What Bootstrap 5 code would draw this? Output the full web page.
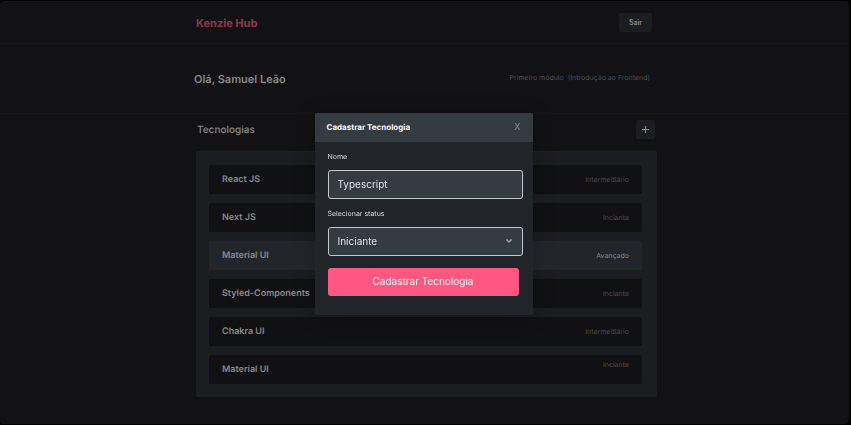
<!DOCTYPE html>
<html lang="pt-BR">
<head>
<meta charset="utf-8">
<meta name="viewport" content="width=device-width, initial-scale=1">
<title>Kenzie Hub</title>
<link href="https://cdn.jsdelivr.net/npm/bootstrap@5.3.0/dist/css/bootstrap.min.css" rel="stylesheet">
<style>
body { background: #000; font-family: Inter, "Liberation Sans", sans-serif; font-size: 8px; line-height: 12px; color: #87888a; text-rendering: geometricPrecision; }
.app-shell { min-height: calc(100vh - 2px); margin: 1px 2px 1px 0; background: #121214; border-radius: 4px; }
.rule-below { border-bottom: 1px solid #17181b; }
.wrap-head { max-width: 457px; height: 42px; padding-right: 1px; }
.wrap-hello { max-width: 461px; height: 69px; padding-right: 5px; }
.wrap-tech { max-width: 467px; padding: 6px 1px 0 5px; }
.brand { font-size: 11px; font-weight: 700; color: #8f354c; text-decoration: none; padding-top: 2px; }
.hello { font-size: 11px; font-weight: 600; padding-top: 2px; }
.module-name { font-size: 7px; color: #4b4d51; white-space: pre; padding-bottom: 2px; }
.tech-title { font-size: 10px; font-weight: 500; padding-left: 1px; }
.btn-dim { background: #1b1d20; color: #87888a; border: 0; border-radius: 2px; height: 19px; font-size: 7px; line-height: 19px; font-weight: 600; padding: 0; }
.btn-exit { width: 33px; }
.btn-plus { width: 19px; margin-right: 2px; }
.tech-list { background: #1b1d20; border-radius: 2px; padding: 14px 15px 13px 13px; gap: 9px; margin-top: 12px; }
.tech-row { background: #111113; border-radius: 2px; height: 29px; padding: 0 13px; }
.tech-row.active-row { background: #22262a; }
.tech-name { font-size: 9px; font-weight: 600; }
.tech-level { font-size: 7px; color: #4b4d51; }
.active-row .tech-level { color: #85888b; }
.dialog-tech { max-width: 218px; margin: 0 auto; padding: 2px 0 0; left: -2px; }
.box-tech { background: #212529; border: 0; border-radius: 2px; box-shadow: 0 2px 20px rgba(0, 0, 0, .25); color: #f8f9fa; }
.box-head { background: #343b41; height: 29px; padding: 0 12px; border-radius: 2px 2px 0 0; }
.box-title { font-size: 8px; line-height: 12px; font-weight: 700; }
.btn-x { background: none; border: 0; padding: 0; font-size: 9px; color: #868e96; }
.box-body { padding: 9px 10px 19px 13px; }
.field-label { font-size: 7px; line-height: 12px; margin: 0 0 7px; color: #dcdee0; }
.field-box { height: 29px; border: 1px solid #c5c8cb; border-radius: 3px; background: #343b41; color: #dfe2e5; font-size: 10px; line-height: 12px; padding: 0 9px; }
.field-box:focus { background: #343b41; color: #dfe2e5; box-shadow: none; border-color: #f8f9fa; }
select.field-box { background-image: none; }
.field-gap { margin-bottom: 9px; }
.chevron { right: 10px; top: 10px; pointer-events: none; }
.btn-send { background: #ff577f; color: #fff; border: 0; border-radius: 3px; height: 28px; font-size: 10px; font-weight: 400; padding: 0; margin-top: 12px; }
.send-wrap { padding-right: 4px; }
</style>
</head>
<body>
<div class="app-shell">
  <header class="rule-below">
    <div class="wrap-head mx-auto d-flex justify-content-between align-items-center">
      <a class="brand" href="#">Kenzie Hub</a>
      <button type="button" class="btn btn-dim btn-exit">Sair</button>
    </div>
  </header>
  <section class="rule-below">
    <div class="wrap-hello mx-auto d-flex justify-content-between align-items-center">
      <h1 class="hello mb-0">Olá, Samuel Leão</h1>
      <p class="module-name mb-0">Primeiro módulo  (Introdução ao Frontend)</p>
    </div>
  </section>
  <main class="wrap-tech mx-auto">
    <div class="d-flex justify-content-between align-items-center">
      <h2 class="tech-title mb-0">Tecnologias</h2>
      <button type="button" class="btn btn-dim btn-plus d-flex align-items-center justify-content-center" aria-label="Adicionar tecnologia">
        <svg width="7" height="7" viewBox="0 0 7 7" stroke="currentColor" stroke-width="1.1" aria-hidden="true"><path d="M3.5 0v7M0 3.5h7"/></svg>
      </button>
    </div>
    <ul class="tech-list list-unstyled d-flex flex-column mb-0">
      <li class="tech-row d-flex justify-content-between align-items-center"><span class="tech-name">React JS</span><span class="tech-level">Intermediário</span></li>
      <li class="tech-row d-flex justify-content-between align-items-center"><span class="tech-name">Next JS</span><span class="tech-level">Inciante</span></li>
      <li class="tech-row active-row d-flex justify-content-between align-items-center"><span class="tech-name">Material UI</span><span class="tech-level">Avançado</span></li>
      <li class="tech-row d-flex justify-content-between align-items-center"><span class="tech-name">Styled-Components</span><span class="tech-level">Inciante</span></li>
      <li class="tech-row d-flex justify-content-between align-items-center"><span class="tech-name">Chakra UI</span><span class="tech-level">Intermediário</span></li>
      <li class="tech-row d-flex justify-content-between align-items-center"><span class="tech-name">Material UI</span><span class="tech-level align-self-start pt-1">Inciante</span></li>
    </ul>
  </main>
</div>

<div class="modal d-block" tabindex="-1" role="dialog" aria-modal="true" aria-labelledby="dlgTitle">
  <div class="modal-dialog dialog-tech d-flex align-items-center min-vh-100">
    <form class="modal-content box-tech">
      <div class="box-head d-flex justify-content-between align-items-center">
        <h2 class="box-title mb-0" id="dlgTitle">Cadastrar Tecnologia</h2>
        <button type="button" class="btn-x" aria-label="Fechar">X</button>
      </div>
      <div class="box-body">
        <label class="field-label d-block" for="techName">Nome</label>
        <input class="form-control field-box field-gap" id="techName" type="text" value="Typescript">
        <label class="field-label d-block" for="techStatus">Selecionar status</label>
        <div class="position-relative">
          <select class="form-select field-box" id="techStatus">
            <option>Iniciante</option>
            <option>Intermediário</option>
            <option>Avançado</option>
          </select>
          <svg class="chevron position-absolute" width="8" height="8" viewBox="0 0 8 8" fill="none" stroke="#9a9fa5" stroke-width="1.5" aria-hidden="true"><path d="M1.4 2.4 4 5l2.600-2.600"/></svg>
        </div>
        <div class="send-wrap"><button type="submit" class="btn btn-send w-100">Cadastrar Tecnologia</button></div>
      </div>
    </form>
  </div>
</div>
<script src="https://cdn.jsdelivr.net/npm/bootstrap@5.3.0/dist/js/bootstrap.bundle.min.js"></script>
</body>
</html>
